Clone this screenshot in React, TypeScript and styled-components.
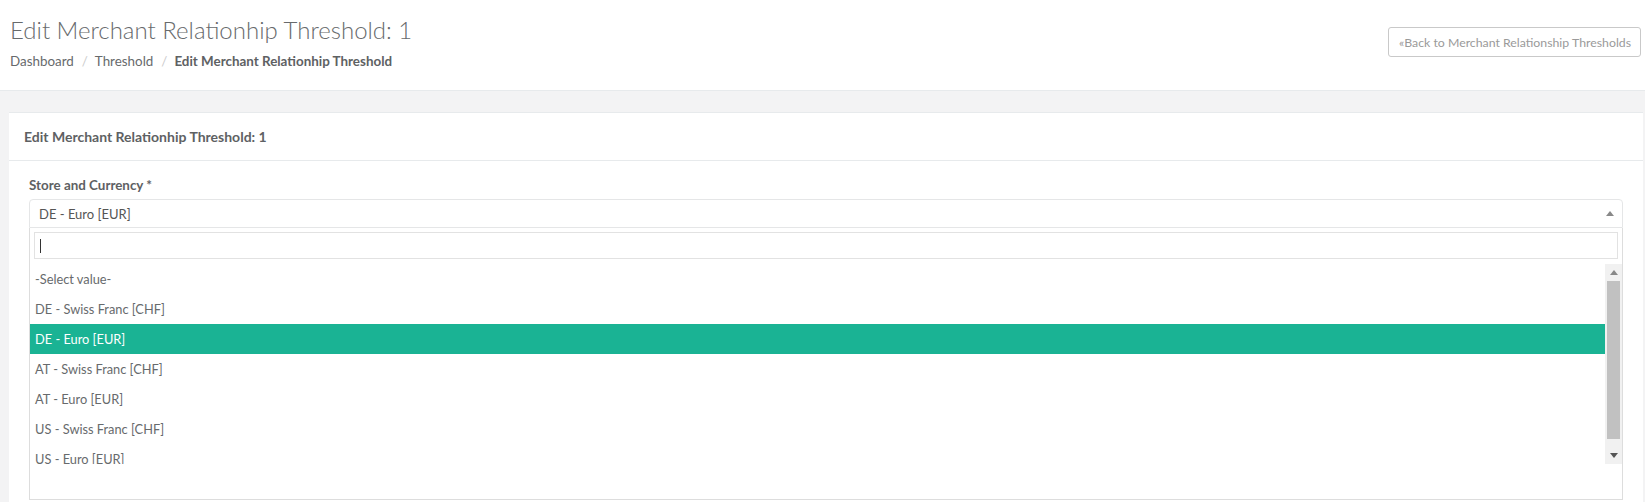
import React from 'react';
import styled, { createGlobalStyle } from 'styled-components';

const GlobalStyle = createGlobalStyle`
  body {
    margin: 0;
    background: #f3f3f4;
    font-family: Lato, "Open Sans", "Liberation Sans", sans-serif;
    font-size: 13px;
    color: #676a6c;
  }
`;

const options = [
  '-Select value-',
  'DE - Swiss Franc [CHF]',
  'DE - Euro [EUR]',
  'AT - Swiss Franc [CHF]',
  'AT - Euro [EUR]',
  'US - Swiss Franc [CHF]',
  'US - Euro [EUR]',
  'CH - Swiss Franc [CHF]',
];

export default function App() {
  return (
    <>
      <GlobalStyle />
      <PageHeading>
        <div>
          <Title>Edit Merchant Relationhip Threshold: 1</Title>
          <Breadcrumb>
            <Crumb>Dashboard</Crumb>
            <Sep>/</Sep>
            <Crumb>Threshold</Crumb>
            <Sep>/</Sep>
            <Crumb active>Edit Merchant Relationhip Threshold</Crumb>
          </Breadcrumb>
        </div>
        <BackButton>«Back to Merchant Relationship Thresholds</BackButton>
      </PageHeading>

      <Wrapper>
        <Card>
          <CardTitle>Edit Merchant Relationhip Threshold: 1</CardTitle>
          <CardBody>
            <Label>Store and Currency *</Label>
            <Select>
              <span>DE - Euro [EUR]</span>
              <Caret up />
            </Select>
            <Dropdown>
              <Search>
                <Cursor />
              </Search>
              <ListRow>
                <List>
                  {options.map((o) => (
                    <Option key={o} selected={o === 'DE - Euro [EUR]'}>
                      {o}
                    </Option>
                  ))}
                </List>
                <ScrollBar>
                  <ScrollButton>
                    <Caret up />
                  </ScrollButton>
                  <Thumb />
                  <Track />
                  <ScrollButton>
                    <Caret />
                  </ScrollButton>
                </ScrollBar>
              </ListRow>
            </Dropdown>
          </CardBody>
        </Card>
      </Wrapper>
    </>
  );
}

const PageHeading = styled.div`
  display: flex;
  justify-content: space-between;
  align-items: flex-start;
  height: 90px;
  background: #fff;
  border-bottom: 1px solid #e7eaec;
  padding: 0 4px 0 10px;
`;

const Title = styled.h2`
  margin: 17px 0 0;
  font-size: 24px;
  font-weight: 300;
  line-height: 26px;
  color: #676a6c;
`;

const Breadcrumb = styled.div`
  display: flex;
  align-items: center;
  margin-top: 9px;
  font-size: 13.4px;
  line-height: 18px;
`;

const Crumb = styled.span<{ active?: boolean }>`
  font-weight: ${(p) => (p.active ? 700 : 400)};
  color: ${(p) => (p.active ? '#5e6163' : '#676a6c')};
`;

const Sep = styled.span`
  color: #ccc;
  padding: 0 7px 0 8px;
`;

const BackButton = styled.button`
  margin-top: 27px;
  height: 30px;
  padding: 0 9px 0 10px;
  background: #fff;
  border: 1px solid #c9c9c9;
  border-radius: 3px;
  font-family: inherit;
  font-size: 12.3px;
  color: #9a9a9a;
`;

const Wrapper = styled.div`
  padding: 21px 2px 0 9px;
`;

const Card = styled.div`
  background: #fff;
  border-top: 1px solid #e7eaec;
  min-height: 400px;
`;

const CardTitle = styled.div`
  height: 47px;
  display: flex;
  align-items: center;
  padding: 0 15px;
  font-size: 14px;
  font-weight: 700;
  color: #5e6163;
  border-bottom: 1px solid #e7eaec;
`;

const CardBody = styled.div`
  padding: 15px 20px 0;
`;

const Label = styled.div`
  font-size: 13.4px;
  font-weight: 700;
  color: #5e6163;
  line-height: 18px;
  margin-bottom: 5px;
`;

const Select = styled.div`
  display: flex;
  justify-content: space-between;
  align-items: center;
  height: 27px;
  padding: 0 8px 0 9px;
  border: 1px solid #e5e6e7;
  border-radius: 4px 4px 0 0;
  color: #555;
`;

const Caret = styled.span<{ up?: boolean }>`
  width: 0;
  height: 0;
  border-left: 4px solid transparent;
  border-right: 4px solid transparent;
  ${(p) =>
    p.up ? 'border-bottom: 5px solid #888;' : 'border-top: 5px solid #555;'}
`;

const Dropdown = styled.div`
  border: 1px solid #ddd;
  border-top: none;
  padding: 4px 0 35px;
`;

const Search = styled.div`
  display: flex;
  align-items: center;
  height: 25px;
  margin: 0 4px;
  padding: 0 5px;
  border: 1px solid #e2e2e2;
`;

const Cursor = styled.span`
  width: 1px;
  height: 14px;
  background: #333;
`;

const ListRow = styled.div`
  display: flex;
  margin-top: 5px;
  height: 200px;
`;

const List = styled.div`
  flex: 1;
  overflow: hidden;
`;

const Option = styled.div<{ selected?: boolean }>`
  height: 30px;
  line-height: 30px;
  padding-left: 5px;
  font-size: 12.8px;
  color: ${(p) => (p.selected ? '#fff' : '#676a6c')};
  background: ${(p) => (p.selected ? '#1ab394' : '#fff')};
`;

const ScrollBar = styled.div`
  width: 17px;
  display: flex;
  flex-direction: column;
  background: #f1f1f1;
`;

const ScrollButton = styled.div`
  height: 17px;
  display: flex;
  align-items: center;
  justify-content: center;
`;

const Thumb = styled.div`
  height: 158px;
  margin: 0 2px;
  background: #c1c1c1;
`;

const Track = styled.div`
  flex: 1;
`;
